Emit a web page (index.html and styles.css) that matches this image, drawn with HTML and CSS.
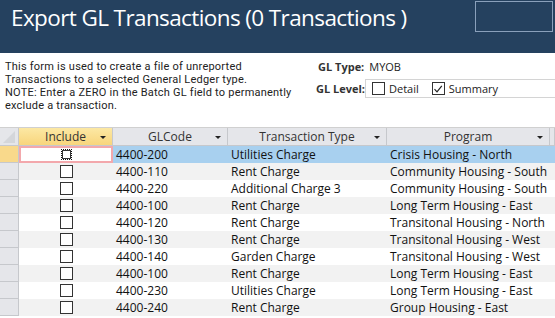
FILE: index.html
```html
<!DOCTYPE html>
<html lang="en">
<head>
  <meta charset="UTF-8">
  <title>Export GL Transactions</title>
  <link rel="stylesheet" href="styles.css">
</head>
<body>
  <div class="topbar">
    <h1>Export GL Transactions (0 Transactions )</h1>
    <div class="topbox"></div>
  </div>

  <div class="info">
    <p class="note">This form is used to create a file of unreported<br>
      Transactions to a selected General Ledger type.<br>
      NOTE: Enter a ZERO in the Batch GL field to permanently<br>
      exclude a transaction.</p>
    <div class="settings">
      <div class="setrow">
        <span class="lbl">GL Type:</span>
        <span>MYOB</span>
      </div>
      <div class="setrow">
        <span class="lbl">GL Level:</span>
        <div class="optframe">
          <span class="opt"><span class="cb"></span>Detail</span>
          <span class="opt"><span class="cb checked">
            <svg width="10" height="10" viewBox="0 0 10 10"><path d="M1.5 5.2 L4 7.8 L8.8 1.8" fill="none" stroke="#222" stroke-width="1.2"/></svg>
          </span>Summary</span>
        </div>
      </div>
    </div>
  </div>

  <div class="grid" id="grid">
    <div class="hd corner"><svg width="18" height="18" viewBox="0 0 18 18"><path d="M3 15 L15 3 L15 15 Z" fill="#d4d6da"/></svg></div>
    <div class="hd active">Include<span class="arrow"></span></div>
    <div class="hd">GLCode<span class="arrow"></span></div>
    <div class="hd">Transaction Type<span class="arrow"></span></div>
    <div class="hd">Program<span class="arrow"></span></div>
    <div class="hd last"></div>
  </div>

  <script>
    const rows = [
      ["4400-200", "Utilities Charge", "Crisis Housing - North"],
      ["4400-110", "Rent Charge", "Community Housing - South"],
      ["4400-220", "Additional Charge 3", "Community Housing - South"],
      ["4400-100", "Rent Charge", "Long Term Housing - East"],
      ["4400-120", "Rent Charge", "Transitonal Housing - North"],
      ["4400-130", "Rent Charge", "Transitonal Housing - West"],
      ["4400-140", "Garden Charge", "Transitonal Housing - West"],
      ["4400-100", "Rent Charge", "Long Term Housing - East"],
      ["4400-230", "Utilities Charge", "Long Term Housing - East"],
      ["4400-240", "Rent Charge", "Group Housing - East"]
    ];
    const grid = document.getElementById("grid");
    let html = "";
    rows.forEach((r, i) => {
      let cls = i === 0 ? "sel" : (i % 2 === 1 ? "alt" : "");
      html += `<div class="rs ${i === 0 ? 'cur' : ''}"></div>`;
      html += `<div class="c inc ${cls} ${i === 0 ? 'focus' : ''}"><span class="box ${i === 0 ? 'dots' : ''}"></span></div>`;
      html += `<div class="c ${cls}">${r[0]}</div>`;
      html += `<div class="c ${cls}">${r[1]}</div>`;
      html += `<div class="c ${cls}">${r[2]}</div>`;
      html += `<div class="c ${cls}"></div>`;
    });
    grid.insertAdjacentHTML("beforeend", html);
  </script>
</body>
</html>
```

FILE: styles.css
```css
body {
  margin: 0;
  font-family: "Open Sans", "Noto Sans", sans-serif;
  color: #222;
  background: white;
  overflow: hidden;
}

.topbar {
  background-color: #25415f;
  height: 53px;
  display: flex;
  align-items: flex-start;
  justify-content: space-between;
}

.topbar h1 {
  margin: 0;
  padding: 2px 0 0 11px;
  font-weight: normal;
  font-size: 22.5px;
  color: white;
  letter-spacing: -0.6px;
}

.topbox {
  width: 76px;
  height: 29px;
  margin-top: 1px;
  margin-right: 2px;
  border: 1px solid #8aa0bb;
}

.info {
  display: flex;
  height: 74px;
  border-bottom: 1px solid #d0d0d0;
}

.note {
  margin: 7px 0 0 5px;
  font-family: Roboto, "Open Sans", sans-serif;
  font-size: 11px;
  line-height: 13px;
  letter-spacing: 0.22px;
  color: #222;
  width: 306px;
}

.settings {
  padding-top: 7px;
  font-size: 11px;
  flex: 1;
}

.setrow {
  display: flex;
  align-items: center;
  height: 13px;
  margin-left: 7px;
}

.setrow + .setrow {
  margin-top: 9px;
  margin-left: 5px;
}

.lbl {
  font-weight: bold;
  color: #333;
  margin-right: 5px;
}

.setrow + .setrow .lbl {
  margin-right: 0;
}

.optframe {
  flex: 1;
  display: flex;
  align-items: center;
  gap: 13px;
  height: 17px;
  border: 1px solid #d4d4d4;
  border-right: none;
  padding-left: 6px;
}

.opt {
  display: flex;
  align-items: center;
  gap: 4px;
  font-size: 11px;
}

.cb {
  width: 11px;
  height: 11px;
  border: 1px solid #333;
  display: flex;
  align-items: center;
  justify-content: center;
}

.grid {
  display: grid;
  grid-template-columns: 19px 94px 115px 159px 163px 1fr;
  grid-auto-rows: 17px;
  grid-template-rows: 18px;
  font-size: 12px;
}

.hd {
  background: #e5e6ea;
  border-right: 1px solid #c6c8cc;
  border-bottom: 1px solid #c6c8cc;
  display: flex;
  align-items: center;
  justify-content: center;
  position: relative;
  color: #333;
}

.hd.active {
  background: linear-gradient(to bottom, #fce8a4, #f8d57c);
}

.hd.corner {
  padding: 0;
}

.arrow {
  position: absolute;
  right: 6px;
  top: 8px;
  border-left: 3px solid transparent;
  border-right: 3px solid transparent;
  border-top: 3px solid #222;
}

.rs {
  background: #e5e6ea;
  border-right: 1px solid #c6c8cc;
  border-bottom: 1px solid #c6c8cc;
}

.rs.cur {
  background: #f9d98b;
}

.c {
  padding-left: 3px;
  display: flex;
  align-items: center;
  white-space: nowrap;
  color: #111;
}

.c.alt {
  background: #f2f2f2;
}

.c.sel {
  background: #a8d0ef;
}

.c.inc {
  justify-content: center;
  padding-left: 0;
  background: white;
}

.c.inc.alt {
  background: #f2f2f2;
}

.c.focus {
  border: 2px solid #f3a8ac;
}

.box {
  width: 11px;
  height: 11px;
  border: 1px solid #333;
  background: white;
}

.box.dots {
  border: 1px dotted #111;
  outline: 1px solid #333;
  outline-offset: -2px;
  width: 9px;
  height: 9px;
}
```
